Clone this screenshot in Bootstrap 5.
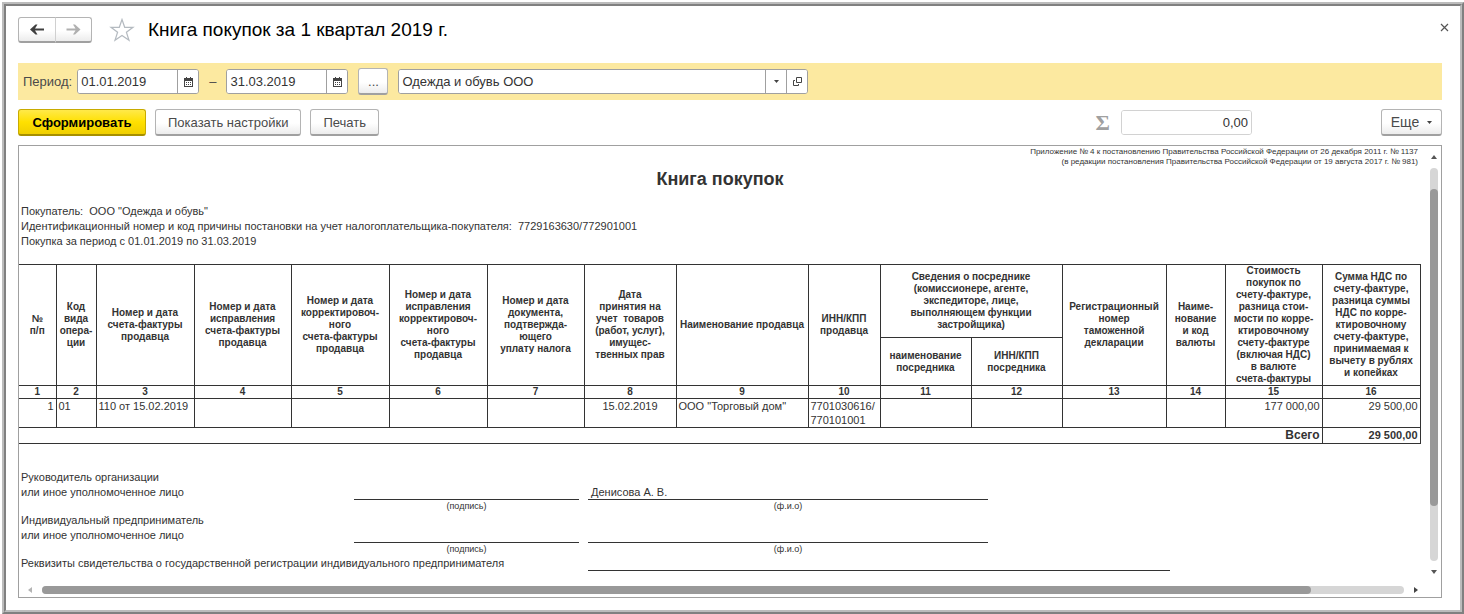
<!DOCTYPE html>
<html lang="ru">
<head>
<meta charset="utf-8">
<meta name="viewport" content="width=device-width, initial-scale=1">
<title>Книга покупок за 1 квартал 2019 г.</title>
<link href="https://cdn.jsdelivr.net/npm/bootstrap@5.3.0/dist/css/bootstrap.min.css" rel="stylesheet">
<style>
  body { font: 13px/15px "Liberation Sans", Arial, sans-serif; color: #4a4a4a; background: #fff; padding: 2px 0 0 2px; }
  .win-outer { min-height: calc(100vh - 2px); border: 2px solid; border-color: #bcbcbc #808080 #808080 #bcbcbc; }
  .win-inner { border: 2px solid; border-color: #808080 #bcbcbc #bcbcbc #808080; padding: 9px 18px 12px 12px; }
  .win-head { height: 30px; margin-bottom: 18px; }
  .win-title { font-size: 19px; line-height: 24px; color: #000; margin-left: 12px; }
  .win-close { margin-right: -7px; }
  .btn-1c { --bs-btn-font-size: 13px; --bs-btn-line-height: 15px; --bs-btn-padding-y: 5px; --bs-btn-padding-x: 12px;
    --bs-btn-color: #4a4a4a; --bs-btn-border-radius: 3px; height: 27px;
    border: 1px solid #b4b4b4; border-bottom: 2px solid #a0a0a0; background: linear-gradient(#fff 55%, #ececec); }
  .btn-go { color: #000; font-weight: 700; width: 128px; padding-left: 0; padding-right: 0; border-color: #c8ab00 #c8ab00 #a68f00; background: linear-gradient(#ffe94a, #ffe000 50%, #f0cf00); }
  .btn-dots { width: 30px; margin: 0 10px; padding-left: 0; padding-right: 0; }
  .btn-more { --bs-btn-font-size: 14px; width: 61px; padding-left: 0; padding-right: 0; }
  .nav-pair .btn-1c { width: 37px; padding: 0; height: 26px; flex: none; }
  .nav-pair .btn-1c:first-child { width: 38px; }
  .nav-pair .btn-1c:last-child { border-left-color: #d0d0d0; }
  .filter-bar { background: #fce9a0; height: 37px; padding: 0 5px; margin-bottom: 9px; }
  .filter-label { margin-right: 5px; }
  .filter-dash { padding: 0 10px; }
  .field-1c { height: 25px; border: 1px solid #a0a0a0; border-radius: 3px; background: #fff; overflow: hidden; }
  .field-1c input { border: 0; outline: 0; padding: 0 3px; min-width: 0; flex: 1 1 0; color: #333; background: #fff; }
  .field-1c button { border: 0; border-left: 1px solid #a0a0a0; background: #fff; width: 21px; padding: 0; flex: none; display: flex; align-items: center; justify-content: center; }
  .date-field { width: 122px; }
  .org-field { width: 410px; }
  .sum-field { width: 131px; border-color: #d2d2d2; margin-right: 129px; }
  .sum-field input { text-align: right; }
  .actions { margin-bottom: 9px; }
  .btn-row { gap: 9px; }
  .sigma { font: 700 22px/24px "Liberation Serif", serif; color: #a0a0a0; margin-right: 11px; }

  .report { border: 1px solid #a0a0a0; color: #333; font-size: 11px; line-height: 15px; }
  .sheet { flex: 1 1 0; min-width: 0; height: 436px; }
  .appendix { font-size: 8px; line-height: 10px; padding: 1px 3px 0 0; }
  .report h1 { font-size: 18px; line-height: 22px; font-weight: 700; margin: 1px 0 14px; }
  .pad-l { padding-left: 2px; }
  .book-wrap { padding-right: 1px; }
  .book { width: 100%; table-layout: fixed; border-collapse: collapse; margin-top: 15px; }
  .book th, .book td { border: 1px solid #333; padding: 0 2px; }
  .book tr > :first-child { border-left: 0; }
  .book thead tr:nth-child(2) > :first-child { border-left: 1px solid #333; }
  .book th { font-size: 10px; line-height: 12px; text-align: center; padding: 0; white-space: nowrap; }
  .book tbody td { vertical-align: top; line-height: 14px; }
  .book .total-row td { line-height: 15px; }
  .book .total-row td:first-child { font-size: 12px; }
  .signs { display: grid; grid-template-columns: minmax(0, 335fr) 225fr 9fr 400fr 182fr 251fr; margin-top: 26px; }
  .who { white-space: nowrap; height: 43px; }
  .line-b { border-bottom: 1px solid #333; height: 30px; padding: 15px 0 0 3px; }
  .cap { font-size: 9px; line-height: 12px; text-align: center; }
  .reg-line { grid-column: 4 / 6; border-bottom: 1px solid #333; height: 15px; }

  .vbar { flex: none; width: 20px; padding: 5px 3px 0 9px; }
  .vtrack, .htrack { background: #d6d6d6; border-radius: 4px; }
  .vtrack { width: 8px; height: 393px; margin: 9px 0; padding-top: 21px; }
  .vthumb { height: 317px; border-radius: 4px; background: #999; }
  .hbar { height: 15px; padding: 1px 23px 0 9px; }
  .htrack { height: 8px; flex: 1 1 0; margin: 0 10px; }
  .hthumb { height: 8px; width: 93.2%; border-radius: 4px; background: #999; }
</style>
</head>
<body>
<div class="win-outer">
<div class="win-inner">
  <header class="win-head d-flex align-items-center">
    <div class="btn-group nav-pair">
      <button type="button" class="btn btn-1c d-flex align-items-center justify-content-center" aria-label="Назад"><svg width="15" height="11" viewBox="0 0 15 11"><path d="M0 5.500 5.500 0.500H7.500L5 4.500H14V6.500H5L7.500 10.500H5.500z" fill="#404040"/></svg></button>
      <button type="button" class="btn btn-1c d-flex align-items-center justify-content-center" aria-label="Вперед"><svg width="15" height="11" viewBox="0 0 15 11"><path d="M14.500 5.500 9 0.500H7L9.500 4.500H0.500V6.500H9.500L7 10.500H9z" fill="#b0b0b0"/></svg></button>
    </div>
    <svg class="ms-3" width="28" height="24" viewBox="0 0 28 24"><path d="M14 1.500 16.700 9.300H25L18.400 14.200 21 22.300 14 17.400 7 22.300 9.600 14.200 3 9.300H11.300z" fill="none" stroke="#b4bac0" stroke-width="1.200"/></svg>
    <span class="win-title">Книга покупок за 1 квартал 2019 г.</span>
    <button type="button" class="btn p-0 border-0 ms-auto mt-2 d-flex align-self-start win-close" aria-label="Закрыть"><svg width="9" height="9" viewBox="0 0 9 9"><path d="M1 1 8 8M8 1 1 8" stroke="#555" stroke-width="1.200"/></svg></button>
  </header>

  <div class="filter-bar d-flex align-items-center">
    <label for="from" class="filter-label">Период:</label>
    <div class="field-1c date-field d-flex"><input id="from" value="01.01.2019"><button type="button" aria-label="Выбрать дату"><svg width="9" height="10" viewBox="0 0 9 10"><path d="M0 1H9V10H0zM1 4V9H8V4z" fill="#444" fill-rule="evenodd"/><path d="M2.500 0V2M6.500 0V2" stroke="#444"/><path d="M2 5.500H7.500M2 7.500H7.500" stroke="#444" stroke-dasharray="1 1"/></svg></button></div>
    <label for="to" class="filter-dash">–</label>
    <div class="field-1c date-field d-flex"><input id="to" value="31.03.2019"><button type="button" aria-label="Выбрать дату"><svg width="9" height="10" viewBox="0 0 9 10"><path d="M0 1H9V10H0zM1 4V9H8V4z" fill="#444" fill-rule="evenodd"/><path d="M2.500 0V2M6.500 0V2" stroke="#444"/><path d="M2 5.500H7.500M2 7.500H7.500" stroke="#444" stroke-dasharray="1 1"/></svg></button></div>
    <button type="button" class="btn btn-1c btn-dots">...</button>
    <div class="field-1c org-field d-flex"><input aria-label="Организация" value="Одежда и обувь ООО"><button type="button" aria-label="Выбрать"><svg width="5" height="3"><path d="M0 0H5L2.500 3z" fill="#444"/></svg></button><button type="button" aria-label="Открыть"><svg width="9" height="9" viewBox="0 0 9 9"><path d="M3.500 .5H8.500V5.500H3.500zM2 3.500H.5V8.500H5.500V7" fill="none" stroke="#444"/></svg></button></div>
  </div>

  <div class="actions d-flex align-items-center">
    <div class="btn-row d-flex">
      <button type="button" class="btn btn-1c btn-go">Сформировать</button>
      <button type="button" class="btn btn-1c">Показать настройки</button>
      <button type="button" class="btn btn-1c">Печать</button>
    </div>
    <label for="sum" class="sigma ms-auto">Σ</label>
    <div class="field-1c sum-field d-flex"><input id="sum" value="0,00"></div>
    <button type="button" class="btn btn-1c btn-more d-flex align-items-center justify-content-center">Еще<svg class="ms-2" width="5" height="3"><path d="M0 0H5L2.500 3z" fill="#444"/></svg></button>
  </div>

  <main class="report">
    <div class="d-flex">
      <div class="sheet">
        <div class="appendix text-end">Приложение № 4 к постановлению Правительства Российской Федерации от 26 декабря 2011 г. № 1137<br>(в редакции постановления Правительства Российской Федерации от 19 августа 2017 г. № 981)</div>
        <h1 class="text-center">Книга покупок</h1>
        <div class="pad-l">Покупатель:&nbsp; ООО "Одежда и обувь"</div>
        <div class="pad-l">Идентификационный номер и код причины постановки на учет налогоплательщика-покупателя:&nbsp; 7729163630/772901001</div>
        <div class="pad-l">Покупка за период с 01.01.2019 по 31.03.2019</div>
        <div class="book-wrap">
        <table class="book">
          <colgroup><col style="width:37px"><col style="width:40px"><col style="width:98px"><col style="width:97px"><col style="width:98px"><col style="width:98px"><col style="width:97px"><col style="width:92px"><col style="width:132px"><col style="width:72px"><col style="width:91px"><col style="width:91px"><col style="width:104px"><col style="width:59px"><col style="width:97px"><col style="width:98px"></colgroup>
          <thead>
            <tr style="height:73px">
              <th rowspan="2">№<br>п/п</th><th rowspan="2">Код<br>вида<br>опера-<br>ции</th><th rowspan="2">Номер и дата<br>счета-фактуры<br>продавца</th><th rowspan="2">Номер и дата<br>исправления<br>счета-фактуры<br>продавца</th><th rowspan="2">Номер и дата<br>корректировоч-<br>ного<br>счета-фактуры<br>продавца</th><th rowspan="2">Номер и дата<br>исправления<br>корректировоч-<br>ного<br>счета-фактуры<br>продавца</th><th rowspan="2">Номер и дата<br>документа,<br>подтвержда-<br>ющего<br>уплату налога</th><th rowspan="2">Дата<br>принятия на<br>учет&nbsp; товаров<br>(работ, услуг),<br>имущес-<br>твенных прав</th><th rowspan="2">Наименование продавца</th><th rowspan="2">ИНН/КПП<br>продавца</th><th colspan="2">Сведения о посреднике<br>(комиссионере, агенте,<br>экспедиторе, лице,<br>выполняющем функции<br>застройщика)</th><th rowspan="2">Регистрационный<br>номер<br>таможенной<br>декларации</th><th rowspan="2">Наиме-<br>нование<br>и код<br>валюты</th><th rowspan="2">Стоимость<br>покупок по<br>счету-фактуре,<br>разница стои-<br>мости по корре-<br>ктировочному<br>счету-фактуре<br>(включая НДС)<br>в валюте<br>счета-фактуры</th><th rowspan="2">Сумма НДС по<br>счету-фактуре,<br>разница суммы<br>НДС по корре-<br>ктировочному<br>счету-фактуре,<br>принимаемая к<br>вычету в рублях<br>и копейках</th>
            </tr>
            <tr style="height:48px"><th>наименование<br>посредника</th><th>ИНН/КПП<br>посредника</th></tr>
            <tr><th>1</th><th>2</th><th>3</th><th>4</th><th>5</th><th>6</th><th>7</th><th>8</th><th>9</th><th>10</th><th>11</th><th>12</th><th>13</th><th>14</th><th>15</th><th>16</th></tr>
          </thead>
          <tbody>
            <tr><td class="text-end">1</td><td>01</td><td>110 от 15.02.2019</td><td></td><td></td><td></td><td></td><td class="text-center">15.02.2019</td><td>ООО "Торговый дом"</td><td>7701030616/<br>770101001</td><td></td><td></td><td></td><td></td><td class="text-end">177 000,00</td><td class="text-end">29 500,00</td></tr>
            <tr class="fw-bold text-end total-row"><td colspan="15">Всего</td><td>29 500,00</td></tr>
          </tbody>
        </table>
        </div>
        <div class="signs">
          <div class="pad-l who">Руководитель организации<br>или иное уполномоченное лицо</div>
          <div><div class="line-b"></div><div class="cap">(подпись)</div></div><span></span>
          <div><div class="line-b">Денисова А. В.</div><div class="cap">(ф.и.о)</div></div><span></span><span></span>
          <div class="pad-l who">Индивидуальный предприниматель<br>или иное уполномоченное лицо</div>
          <div><div class="line-b"></div><div class="cap">(подпись)</div></div><span></span>
          <div><div class="line-b"></div><div class="cap">(ф.и.о)</div></div><span></span><span></span>
          <div class="pad-l text-nowrap">Реквизиты свидетельства о государственной регистрации индивидуального предпринимателя</div>
          <div class="reg-line"></div>
        </div>
      </div>
      <div class="vbar d-flex flex-column align-items-center">
        <svg class="mt-1" width="6" height="4"><path d="M0 4H6L3 0z" fill="#555"/></svg>
        <div class="vtrack"><div class="vthumb"></div></div>
        <svg width="6" height="4"><path d="M0 0H6L3 4z" fill="#555"/></svg>
      </div>
    </div>
    <div class="hbar d-flex align-items-center">
      <svg width="4" height="6"><path d="M4 0V6L0 3z" fill="#b4b4b4"/></svg>
      <div class="htrack"><div class="hthumb"></div></div>
      <svg width="4" height="6"><path d="M0 0V6L4 3z" fill="#444"/></svg>
    </div>
  </main>
</div>
</div>
<script src="https://cdn.jsdelivr.net/npm/bootstrap@5.3.0/dist/js/bootstrap.bundle.min.js"></script>
</body>
</html>
